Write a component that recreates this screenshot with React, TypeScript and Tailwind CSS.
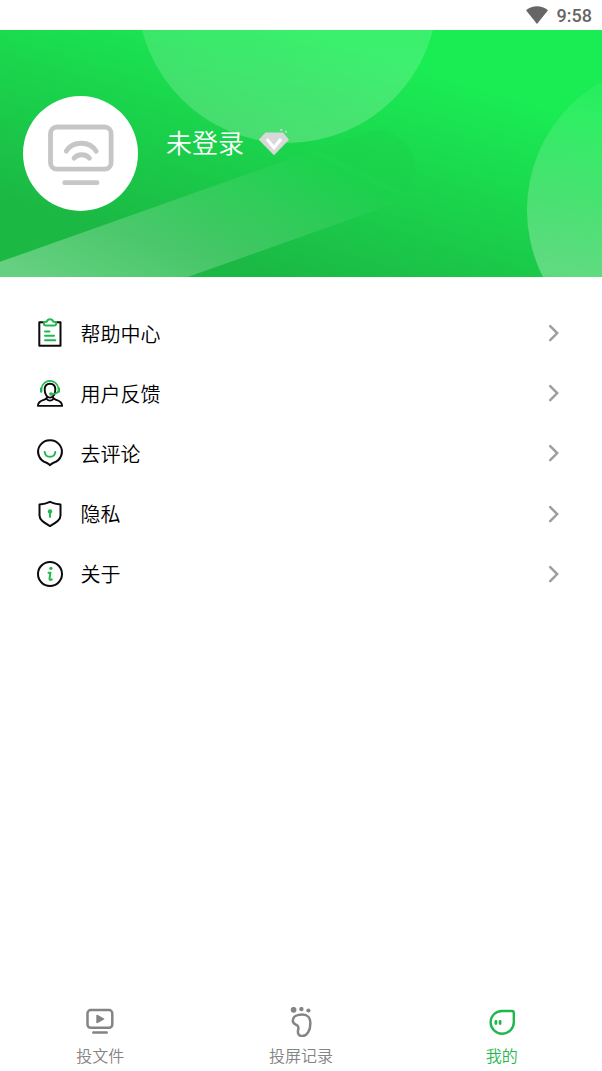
import React, { useState } from 'react';

const ClipboardIcon = () => (
  <svg viewBox="0 0 30 32" className="w-[30px] h-8" fill="none" strokeWidth="2" strokeLinejoin="round" strokeLinecap="round">
    <path d="M8 5.300H4.300v23.500h21.200V5.300H22" stroke="#0b0b0b" />
    <path d="M10.800 8.500a1.900 1.900 0 0 1-.1-3.800h1.100a3.300 3.300 0 0 1 6.400 0h1.100a1.900 1.900 0 0 1-.1 3.800z" stroke="#1fb84f" strokeWidth="1.900" />
    <path d="M10 14.500h4.500M10 18.800h9M10 23.300h10.300" stroke="#1fb84f" />
  </svg>
);

const SupportIcon = () => (
  <svg viewBox="0 0 30 32" className="w-[30px] h-8" fill="none" strokeWidth="1.900" strokeLinecap="round" strokeLinejoin="round">
    <path d="M6.700 11a8.400 8.400 0 0 1 16.600 0" stroke="#1fb84f" strokeWidth="1.600" />
    <path d="M6.200 11.500v3M23.800 11.500v3" stroke="#1fb84f" strokeWidth="2.400" />
    <path d="M15 6.700c3.400 0 5.300 2.400 5.300 6 0 4.200-2.100 7.900-5.300 7.900s-5.300-3.700-5.300-7.900C9.700 9.100 11.600 6.700 15 6.700z" stroke="#0b0b0b" />
    <path d="M12 20.300c0 1.700-1.500 2-4 2.900-3.500 1.200-5 2.300-5.100 5.700h24.200c-.1-3.400-1.600-4.500-5.100-5.700-2.500-.9-4-1.200-4-2.900M12 22.300c1.200 1.800 4.800 1.800 6 0" stroke="#0b0b0b" />
    <path d="M22.800 15c-1 1.400-3 2-5.800 2" stroke="#1fb84f" strokeWidth="1.700" />
    <circle cx="16" cy="17" r="1.800" fill="#1fb84f" />
  </svg>
);

const CommentIcon = () => (
  <svg viewBox="0 0 30 32" className="w-[30px] h-8" fill="none" strokeWidth="2" strokeLinecap="round" strokeLinejoin="round">
    <path d="M15 28.200c-1-1.200-2.200-2-3.500-2.500A11.900 11.500 0 1 1 18.500 25.700c-1.300.5-2.500 1.300-3.500 2.500z" stroke="#0b0b0b" />
    <path d="M9.700 15c.7 6.400 9.900 6.400 10.600 0" stroke="#1fb84f" />
  </svg>
);

const ShieldIcon = () => (
  <svg viewBox="0 0 30 32" className="w-[30px] h-8" fill="none" strokeWidth="2" strokeLinejoin="round">
    <path d="M15 3.800c3.500 1.600 7 2.300 10.500 2.600v11c0 5-5.200 7.600-10.500 10.700C9.700 25 4.500 22.400 4.500 17.400v-11C8 6.100 11.500 5.400 15 3.800z" stroke="#0b0b0b" />
    <circle cx="15" cy="13.500" r="2.200" fill="#1fb84f" />
    <path d="M15 14v5.700" stroke="#1fb84f" strokeWidth="1.900" />
  </svg>
);

const AboutIcon = () => (
  <svg viewBox="0 0 30 32" className="w-[30px] h-8" fill="none" strokeWidth="2" strokeLinecap="round">
    <circle cx="15" cy="16" r="12" stroke="#0b0b0b" />
    <circle cx="15.900" cy="10.300" r="1.600" fill="#1fb84f" />
    <path d="M13.500 14.700h2L14.500 20.600c-.2 1.500.8 1.700 2.300.8" stroke="#1fb84f" strokeLinejoin="round" />
  </svg>
);

const ArrowIcon = () => (
  <svg viewBox="0 0 12 20" className="w-3 h-5" fill="none" stroke="#9e9e9e" strokeWidth="2.500" strokeLinecap="round">
    <path d="M2.200 3.100l7 7-7 7" />
  </svg>
);

const FileTabIcon = () => (
  <svg viewBox="0 0 30 30" className="w-[30px] h-[30px]" fill="none" stroke="currentColor" strokeWidth="2.500" strokeLinecap="round">
    <rect x="2.500" y="3.100" width="24.800" height="17.600" rx="3.200" />
    <path d="M12 8.400v7.200l6.700-3.600z" fill="currentColor" strokeWidth="1.400" strokeLinejoin="round" />
    <path d="M8.300 25.600h13.400" />
  </svg>
);

const FootTabIcon = () => (
  <svg viewBox="0 0 30 30" className="w-[30px] h-[30px]" fill="none" stroke="currentColor" strokeWidth="2.500">
    <circle cx="7.600" cy="2.800" r="2.900" fill="currentColor" stroke="none" />
    <circle cx="15.400" cy="2.100" r="2.200" fill="currentColor" stroke="none" />
    <circle cx="22.400" cy="3.500" r="2.100" fill="currentColor" stroke="none" />
    <path d="M16.500 7.500c-5.700 0-9.700 2.300-9.700 6.200 0 3.300 2.700 3.400 4.500 4.700 2.400 1.800.5 4 .6 6.600.1 2.500 1.900 4 4.400 4 4.700 0 8.100-5.300 8.100-13 0-5.300-3.200-8.500-7.900-8.500z" />
  </svg>
);

const MineTabIcon = () => (
  <svg viewBox="0 0 30 30" className="w-[30px] h-[30px]" fill="none" stroke="currentColor" strokeWidth="2.400" strokeLinejoin="round" strokeLinecap="round">
    <path d="M15 4h9.800c1.200 0 2 .8 2 2V15.300c0 6.400-5.200 11.400-11.600 11.400S3.600 21.700 3.600 15.300 8.700 4 15 4z" />
    <path d="M8.900 14.300v2.200M13.100 14.300v2.200" strokeWidth="2.800" />
  </svg>
);

const MENU = [
  { id: 'help', title: '帮助中心', icon: ClipboardIcon },
  { id: 'feedback', title: '用户反馈', icon: SupportIcon },
  { id: 'review', title: '去评论', icon: CommentIcon },
  { id: 'privacy', title: '隐私', icon: ShieldIcon },
  { id: 'about', title: '关于', icon: AboutIcon },
];

const TABS = [
  { id: 'files', title: '投文件', icon: FileTabIcon },
  { id: 'history', title: '投屏记录', icon: FootTabIcon },
  { id: 'mine', title: '我的', icon: MineTabIcon },
];

const HeaderBackground = () => (
  <svg viewBox="0 0 602 247" preserveAspectRatio="none" className="absolute inset-0 w-full h-full">
    <defs>
      <linearGradient id="base" gradientUnits="userSpaceOnUse" x1="0" y1="165" x2="68" y2="-67">
        <stop offset="0" stopColor="#1bb944" />
        <stop offset="1" stopColor="#1aed54" />
      </linearGradient>
      <linearGradient id="bubble" x1="0" y1="0" x2="0" y2="1">
        <stop offset="0" stopColor="#fff" stopOpacity="0.020" />
        <stop offset="1" stopColor="#fff" stopOpacity="0.210" />
      </linearGradient>
      <linearGradient id="side" gradientUnits="userSpaceOnUse" x1="640" y1="40" x2="600" y2="247">
        <stop offset="0" stopColor="#fff" stopOpacity="0.020" />
        <stop offset="1" stopColor="#fff" stopOpacity="0.300" />
      </linearGradient>
      <linearGradient id="beam" gradientUnits="userSpaceOnUse" x1="0" y1="235" x2="137" y2="-40">
        <stop offset="0" stopColor="#fff" stopOpacity="0.330" />
        <stop offset="0.780" stopColor="#fff" stopOpacity="0" />
        <stop offset="0.800" stopColor="#1bb744" stopOpacity="0.050" />
        <stop offset="1" stopColor="#1bb744" stopOpacity="0.140" />
      </linearGradient>
    </defs>
    <rect width="602" height="247" fill="url(#base)" />
    <path d="M-60 294L377 139" stroke="url(#beam)" strokeWidth="77" strokeLinecap="round" />
    <circle cx="287.500" cy="-37" r="150" fill="url(#bubble)" />
    <circle cx="675" cy="180" r="148" fill="url(#side)" />
  </svg>
);

const App: React.FC = () => {
  const [activeTab, setActiveTab] = useState('mine');

  return (
    <div className="flex flex-col w-full h-screen bg-white overflow-hidden font-[350] font-['Noto_Sans_CJK_SC',sans-serif]">
      {/* Status bar */}
      <div className="h-[30px] shrink-0 flex items-center justify-end pr-[10px] gap-[9px] text-[#666]">
        <svg viewBox="0 0 22 18" className="w-[22px] h-[18px]" fill="currentColor">
          <path d="M11 18L0 4.300C6.500-1.100 15.500-1.100 22 4.300z" />
        </svg>
        <span className="font-[Roboto,sans-serif] font-medium text-[18px] leading-[30px] pt-[2px]">9:58</span>
      </div>

      {/* Profile header */}
      <div className="relative h-[247px] shrink-0">
        <HeaderBackground />
        <div className="relative flex items-start pl-[23px] pt-[66px]">
          <div className="w-[115px] h-[115px] rounded-full bg-white flex items-center justify-center">
            <svg viewBox="0 0 70 66" className="w-[70px] h-[66px]" fill="none" stroke="#c6c6c6" strokeWidth="4.800" strokeLinecap="round">
              <rect x="4.500" y="6" width="60.600" height="42.200" rx="6.500" />
              <path d="M20.200 30.200c6.500-10.600 23.500-10.600 30 0M28 37.200c3.600-4.600 11.900-4.600 15.500 0" />
              <path d="M18.700 61.700h32.300" />
            </svg>
          </div>
          <div className="flex items-center ml-[28px] mt-[26px] gap-[14px]">
            <span className="text-[26px] leading-[40px] text-white">未登录</span>
            <svg viewBox="0 0 32 30" className="w-8 h-[30px]" fill="#d8d8d8">
              <path d="M7.500 5.500h17.500l6 7.200L16 28.300.8 12.700z" />
              <path d="M9.800 13.200l6.200 7.600 6-7.600" fill="none" stroke="#fff" strokeWidth="3.200" strokeLinecap="square" />
              <circle cx="23.300" cy="3" r="1.100" />
              <circle cx="28" cy="4.800" r="1" />
            </svg>
          </div>
        </div>
      </div>

      <div className="flex-1 pt-[26px]">
        {MENU.map(({ id, title, icon: Icon }) => (
          <button key={id} className="w-full h-[60.200px] flex items-center pl-[35px] pr-[42px] cursor-pointer">
            <Icon />
            <span className="ml-[15.500px] pt-px text-[20px] leading-[30px] text-black">{title}</span>
            <span className="ml-auto"><ArrowIcon /></span>
          </button>
        ))}
      </div>

      {/* Bottom navigation */}
      <div className="h-[71px] shrink-0 grid grid-cols-3">
        {TABS.map(({ id, title, icon: Icon }) => (
          <button
            key={id}
            onClick={() => setActiveTab(id)}
            className={`flex flex-col items-center pt-[7px] cursor-pointer ${activeTab === id ? 'text-[#1fb84f]' : 'text-[#848484]'}`}
          >
            <Icon />
            <span className="mt-[6px] text-[16px] leading-6">{title}</span>
          </button>
        ))}
      </div>
    </div>
  );
};

export default App;
